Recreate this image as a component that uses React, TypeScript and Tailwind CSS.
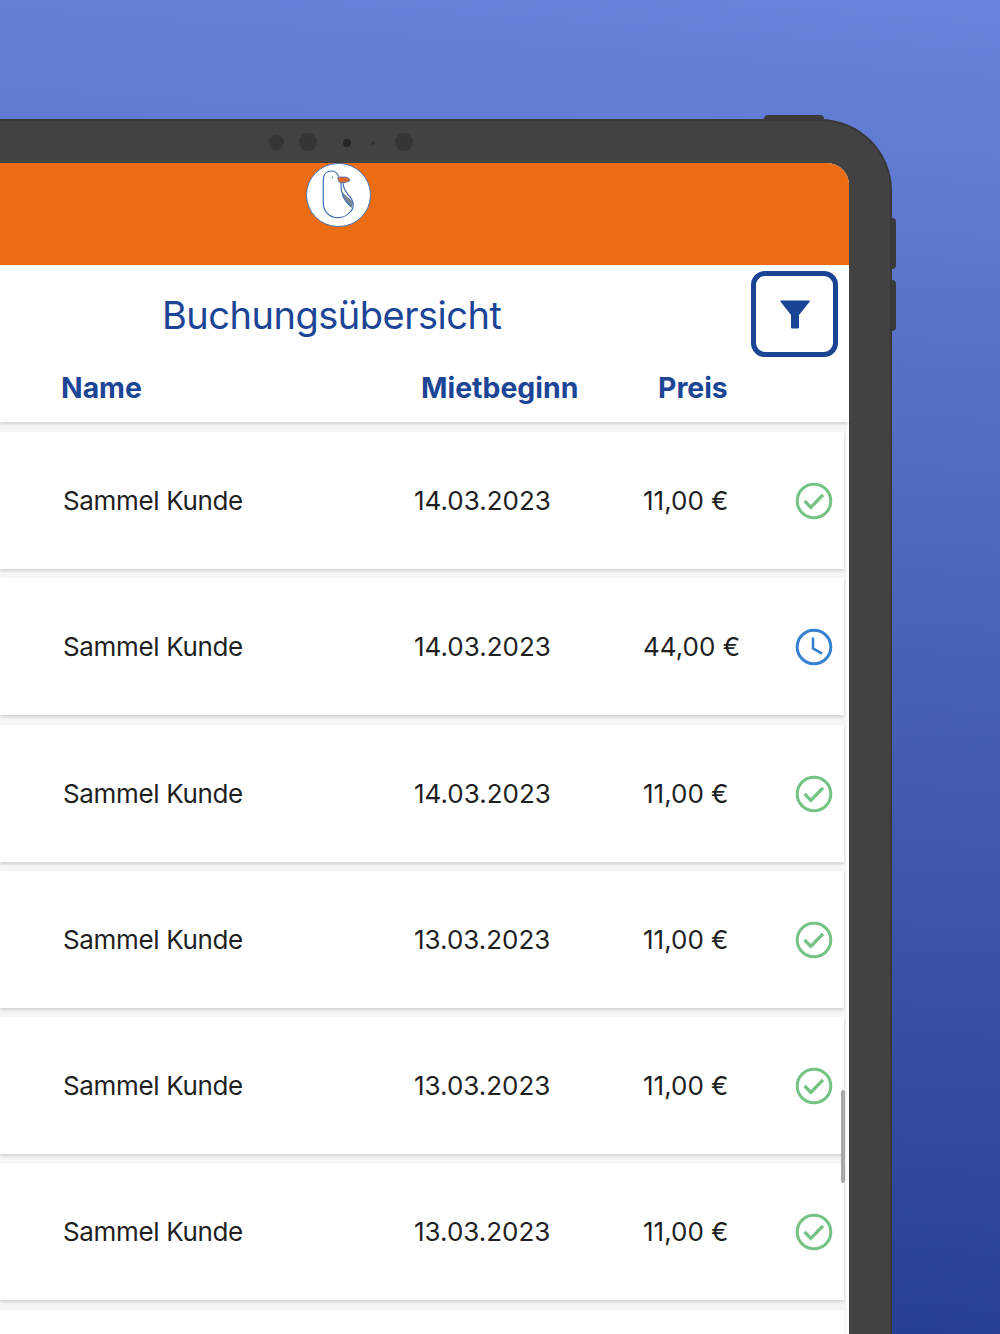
import React from "react";

const rows = [
  { date: "14.03.2023", price: "11,00 €", done: true },
  { date: "14.03.2023", price: "44,00 €", done: false },
  { date: "14.03.2023", price: "11,00 €", done: true },
  { date: "13.03.2023", price: "11,00 €", done: true },
  { date: "13.03.2023", price: "11,00 €", done: true },
  { date: "13.03.2023", price: "11,00 €", done: true },
];

function Check() {
  return (
    <svg width="38" height="38" viewBox="0 0 38 38" fill="none">
      <circle cx="19" cy="19" r="16.8" stroke="#74c384" strokeWidth="3" />
      <path d="M9.6 18.8 L15.8 25.4 L28 12.8" stroke="#74c384" strokeWidth="3.3" />
    </svg>
  );
}

function Clock() {
  return (
    <svg width="38" height="38" viewBox="0 0 38 38" fill="none">
      <circle cx="19" cy="19" r="16.8" stroke="#3581cf" strokeWidth="3" />
      <path d="M18 9.5 V20.5 L27 25.6" stroke="#3581cf" strokeWidth="2.6" />
    </svg>
  );
}

function Logo() {
  return (
    <div className="w-[65px] h-[64px] rounded-full bg-white border border-[#4a76b8] flex items-center justify-center">
      <svg width="63" height="62" viewBox="1 1 63 62" fill="none">
        <path d="M36 28 C39 33 44 35 47 39 C47 41 46.6 43 45.5 45 C41 41 37 35 36 28 Z" fill="#7b8794" />
        <path
          d="M35 20 C34.6 30 38 38 44.5 43 M37 20 C37.5 27 42 32 45 35 C48 39 48 45 45 48 C41 53 37 54.7 32 54.7 C23 54.7 17.3 48 17.3 40 V17 C17.3 11 21 8 25.5 8 C29.5 8 31.5 10 32.5 13.5"
          stroke="#3f6fb5"
          strokeWidth="1.2"
        />
        <path d="M32 14 H39 C41.5 14 43.5 15.5 44 17.5 C41 19.5 37 20 34 19.5 C32.5 19 31.7 16 32 14 Z" fill="#e0662a" stroke="#3f6fb5" strokeWidth="0.8" />
        <circle cx="26.5" cy="14.2" r="0.7" fill="#3f6fb5" />
      </svg>
    </div>
  );
}

export default function App() {
  return (
    <div className="w-[1000px] h-[1334px] overflow-hidden bg-[linear-gradient(184deg,#6a83dc_0%,#223c90_100%)] pt-[119px] font-['Inter','Liberation_Sans',sans-serif]">
      <div className="relative w-[892px] h-[1300px] bg-[#424242] rounded-tr-[72px] border-t-2 border-r-2 border-[#383838] pt-[42px] pr-[41px]">
        <div className="absolute -top-[6px] left-[764px] w-[60px] h-[4px] bg-[#3a3a3a] rounded-t-sm" />
        <div className="absolute top-[97px] -right-[6px] w-[4px] h-[51px] bg-[#3a3a3a] rounded-r-sm" />
        <div className="absolute top-[159px] -right-[6px] w-[4px] h-[51px] bg-[#3a3a3a] rounded-r-sm" />

        <div className="absolute top-[14px] left-[269px] w-[15px] h-[15px] rounded-full bg-[#353535]" />
        <div className="absolute top-[12px] left-[299px] w-[18px] h-[18px] rounded-full bg-[#353535]" />
        <div className="absolute top-[18px] left-[343px] w-[8px] h-[8px] rounded-full bg-[#262626]" />
        <div className="absolute top-[20px] left-[371px] w-[4px] h-[4px] rounded-full bg-[#333333]" />
        <div className="absolute top-[12px] left-[395px] w-[18px] h-[18px] rounded-full bg-[#353535]" />

        <div className="relative h-[1171px] bg-white rounded-tr-[22px] overflow-hidden">
          <div className="h-[102px] bg-[#ec6c14] pl-[306px]">
            <Logo />
          </div>

          <div className="flex items-start h-[92px]">
            <h1 className="ml-[162px] mt-[27px] text-[38px] leading-[46px] font-normal text-[#1c4596] tracking-[-0.5px]">
              Buchungsübersicht
            </h1>
            <div className="ml-auto mr-[11px] mt-[6px] w-[87px] h-[86px] border-[5px] border-[#1a4494] rounded-[14px] flex items-center justify-center">
              <svg width="30" height="30" viewBox="0 0 30 30">
                <path d="M1 1.5 H29 C29.6 1.5 30 2.2 29.6 2.8 L19 16 V28 C19 29 18.4 29.5 17.6 29.5 H12.4 C11.6 29.5 11 29 11 28 V16 L0.6 2.8 C0.2 2.2 0.4 1.5 1 1.5 Z" fill="#1a4494" />
              </svg>
            </div>
          </div>

          <div className="relative flex h-[65px] pt-[14px] text-[28.4px] leading-[34px] font-bold text-[#1c4596] bg-white shadow-[0_2px_3px_rgba(0,0,0,0.14)]">
            <span className="ml-[61px] w-[360px]">Name</span>
            <span className="w-[237px]">Mietbeginn</span>
            <span>Preis</span>
          </div>

          <div className="flex flex-col gap-[9.3px] pt-[10px] mr-[5px] bg-[#f6f6f6] shadow-[2px_0_3px_rgba(0,0,0,0.06)]">
            {rows.map((r, i) => (
              <div
                key={i}
                className="h-[137px] bg-white flex items-center pt-[1px] shadow-[0_2px_3px_rgba(0,0,0,0.15)] text-[26px] leading-[34px] text-[#1f1f1f]"
              >
                <span className="ml-[63px] w-[351px] tracking-[-0.35px]">Sammel Kunde</span>
                <span className="w-[229px]">{r.date}</span>
                <span className="w-[152px]">{r.price}</span>
                {r.done ? <Check /> : <Clock />}
              </div>
            ))}
            <div className="h-[60px] bg-white" />
          </div>

          <div className="absolute top-[927px] right-[4px] w-[4px] h-[93px] rounded-full bg-[#a8a8a8]" />
        </div>
      </div>
    </div>
  );
}
